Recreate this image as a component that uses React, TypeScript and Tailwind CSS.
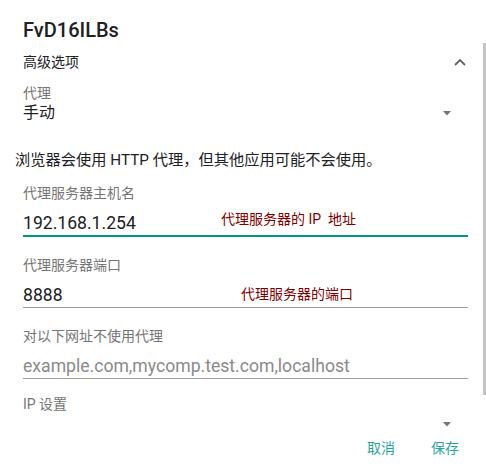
const font = { fontFamily: '"Roboto", "Noto Sans CJK SC", sans-serif' }

function Caret() {
  return (
    <svg width="8" height="5" viewBox="0 0 8 5" className="fill-[#757575]">
      <path d="M0 0h8L4 4.5z" />
    </svg>
  )
}

function Field({
  label,
  value,
  hint,
  hintClass,
  focused,
  placeholder,
}: {
  label: string
  value: string
  hint?: string
  hintClass?: string
  focused?: boolean
  placeholder?: boolean
}) {
  return (
    <div className="flex flex-col">
      <div className="h-[18px] mt-[2px] flex items-center text-[14px] text-[#757575]">{label}</div>
      <div
        className={
          focused
            ? "relative h-[26px] mt-[9px] flex items-center border-b-2 border-[#009688]"
            : "relative h-[25px] mt-[9px] flex items-center border-b border-[#9e9e9e]"
        }
      >
        <span className={placeholder ? "text-[17.6px] text-[#8a8a8a]" : "text-[17.6px] text-[#202124]"}>{value}</span>
        {hint && (
          <span className={`absolute whitespace-pre ${hintClass} text-[14px] text-[#800000]`}>{hint}</span>
        )}
      </div>
    </div>
  )
}

export default function App() {
  return (
    <div className="relative w-[486px] h-[475px] bg-white overflow-hidden" style={font}>
      <div className="absolute right-0 top-[43px] w-[3px] h-[352px] bg-[#c4c4c4]" />
      <div className="pl-[23px] pr-[18px]">
        <div className="pt-[18px] h-[42px] flex items-center text-[20px] font-medium text-[#202124]">FvD16ILBs</div>
        <div className="mt-[8px] h-[24px] flex items-center justify-between text-[14px] text-[#202124]">
          <span>高级选项</span>
          <svg width="12" height="7" viewBox="0 0 12 7" className="mr-[2px]" fill="none" stroke="#5f6368" strokeWidth="1.8">
            <path d="M1 6l5-5 5 5" />
          </svg>
        </div>
        <div className="mt-[10px] h-[18px] flex items-center text-[14px] text-[#757575]">代理</div>
        <div className="mt-[1px] h-[20px] flex items-center justify-between text-[16px] text-[#202124]">
          <span>手动</span>
          <span className="mr-[17px] flex"><Caret /></span>
        </div>
      </div>
      <div className="mt-[26px] ml-[15px] h-[22px] flex items-center text-[15.25px] text-[#202124]">
        浏览器会使用 HTTP 代理，但其他应用可能不会使用。
      </div>
      <div className="pl-[23px] pr-[18px] mt-[11px] flex flex-col gap-[17px]">
        <Field label="代理服务器主机名" value="192.168.1.254" hint="代理服务器的 IP  地址" hintClass="left-[198px] top-[-2px]" focused />
        <Field label="代理服务器端口" value="8888" hint="代理服务器的端口" hintClass="left-[218px] top-[1px]" />
        <Field label="对以下网址不使用代理" value="example.com,mycomp.test.com,localhost" placeholder />
      </div>
      <div className="pl-[23px] pr-[18px]">
        <div className="mt-[16px] h-[18px] flex items-center text-[14px] text-[#757575]">IP 设置</div>
        <div className="h-[22px] flex items-center justify-end">
          <span className="mr-[17px] flex"><Caret /></span>
        </div>
        <div className="mt-[3px] h-[20px] flex items-center justify-end gap-[36px] pr-[9px] text-[14px] text-[#26a69a]">
          <span>取消</span>
          <span>保存</span>
        </div>
      </div>
    </div>
  )
}
